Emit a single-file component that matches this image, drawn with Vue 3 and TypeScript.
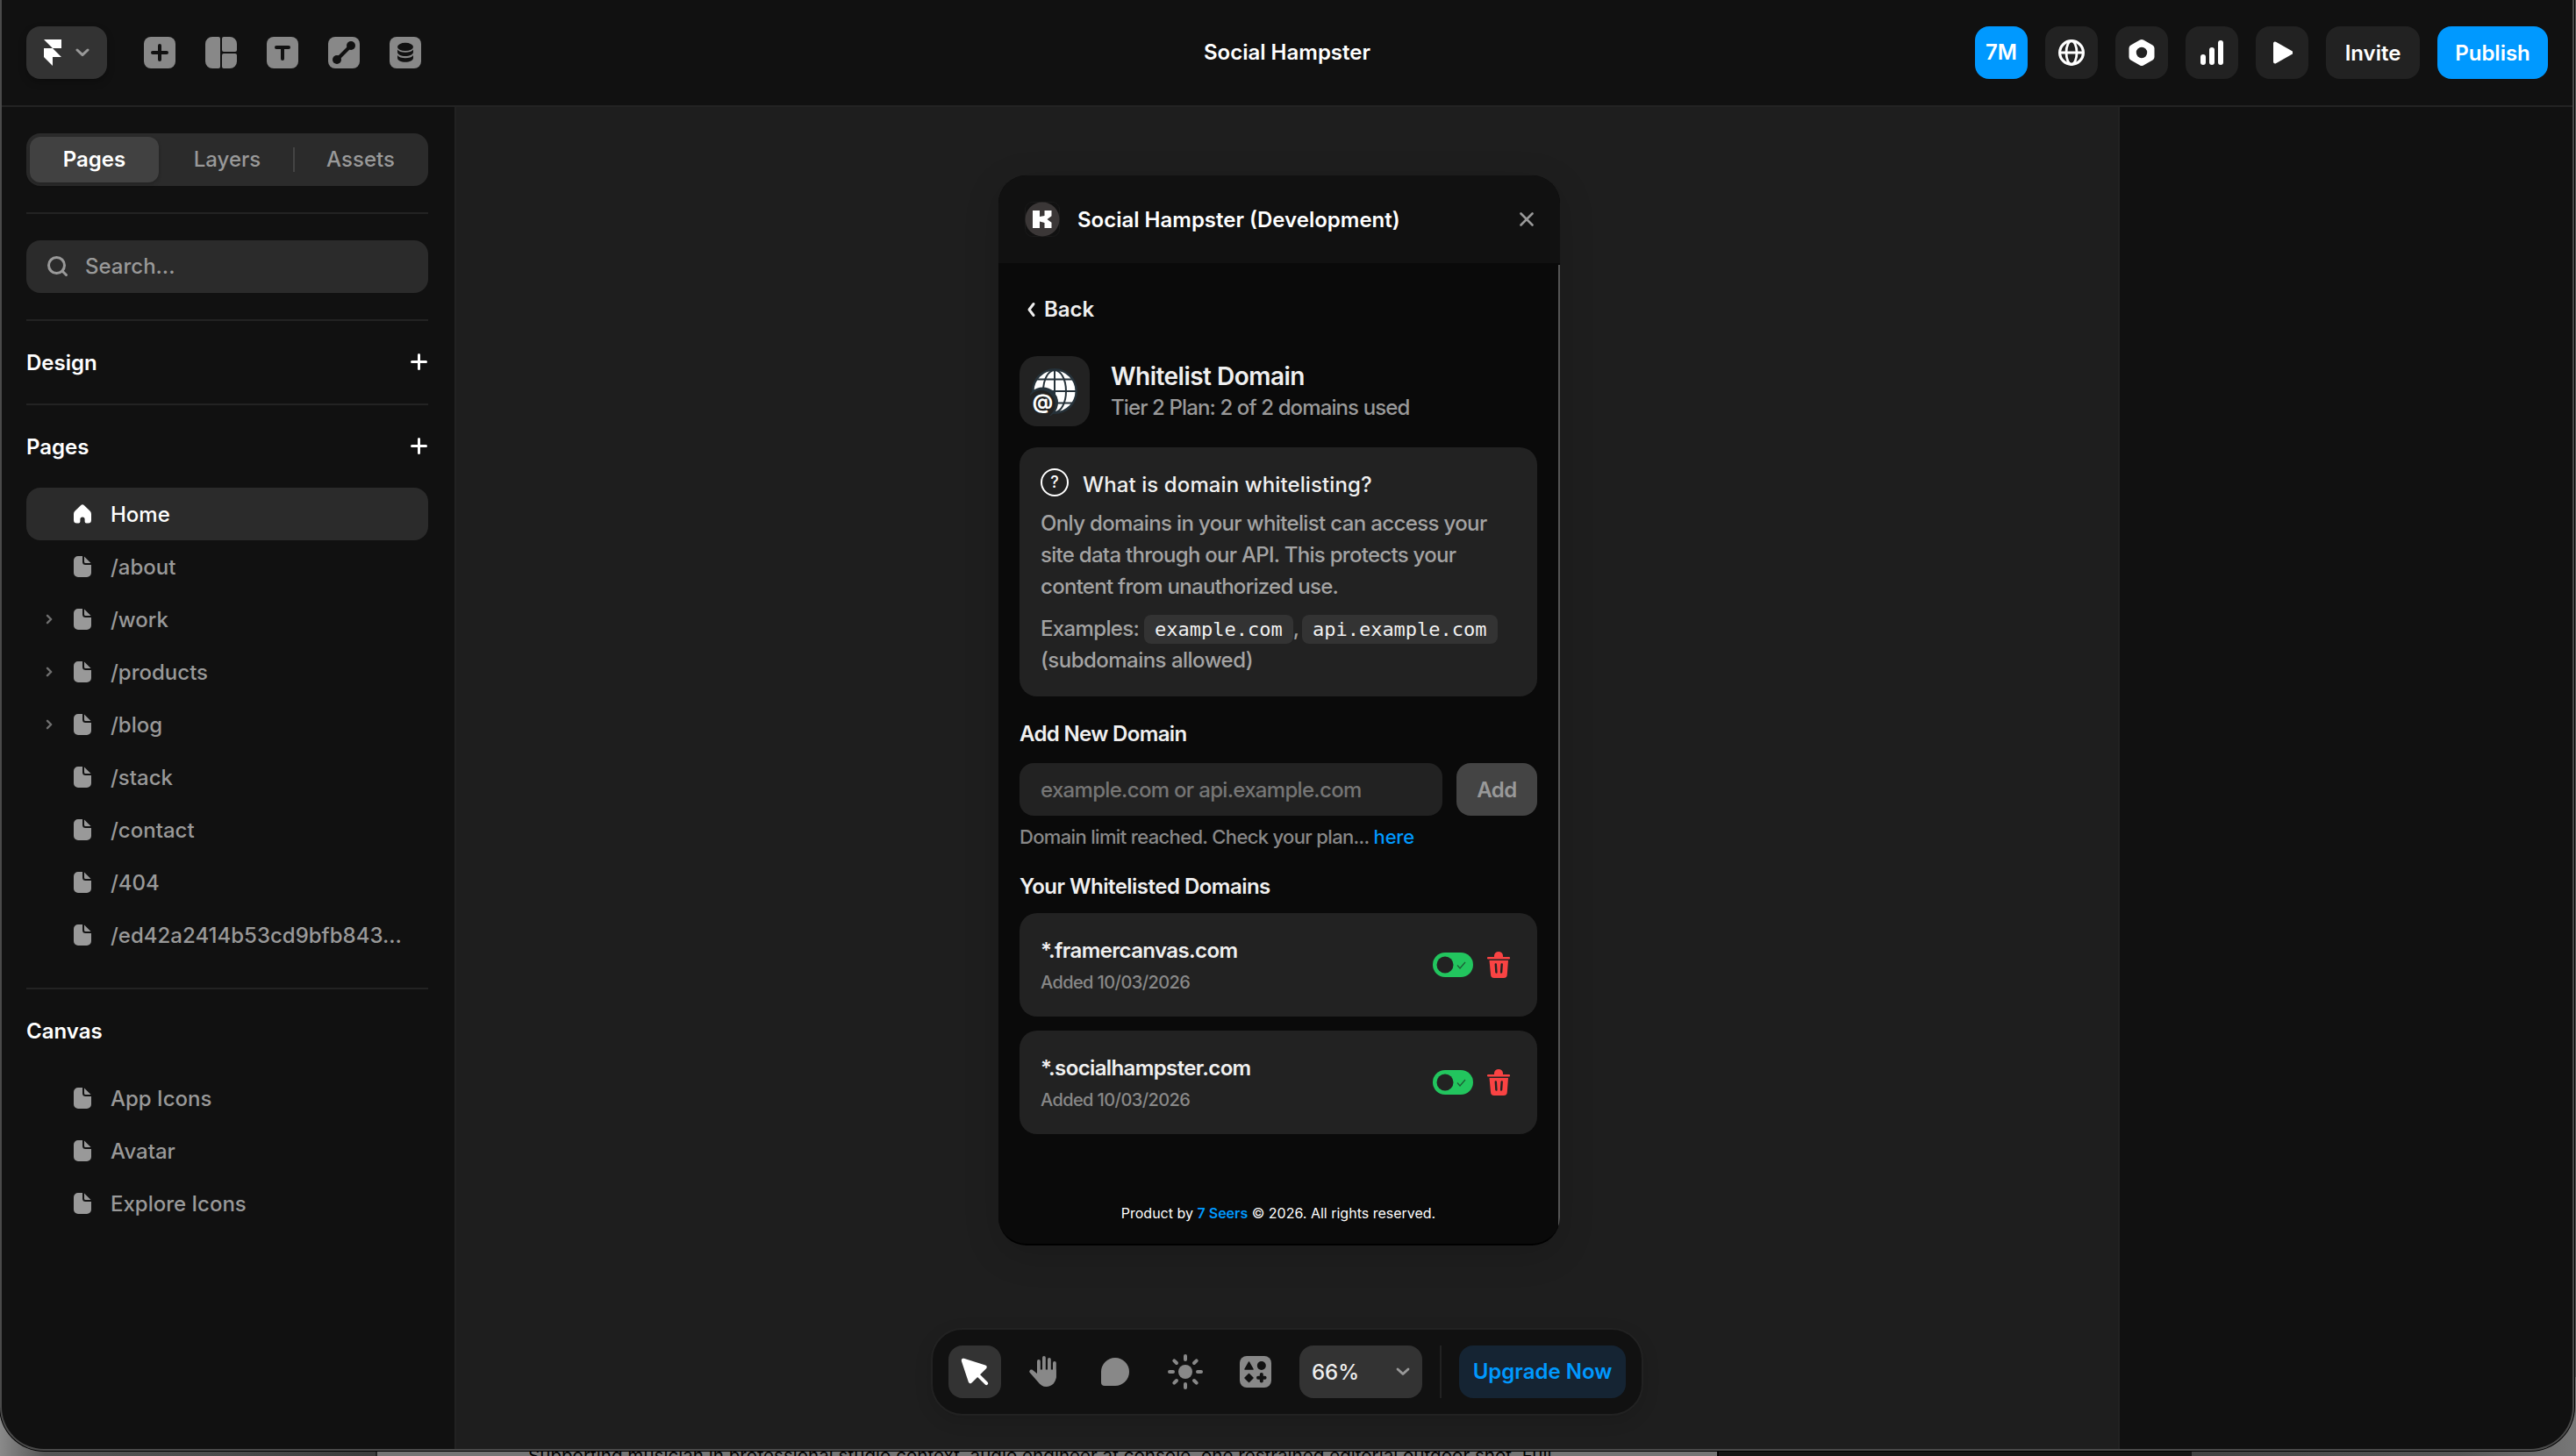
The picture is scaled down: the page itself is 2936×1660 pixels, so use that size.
<script setup lang="ts">
interface PageRow { label: string; home?: boolean; nested?: boolean }

const pages: PageRow[] = [
  { label: 'Home', home: true },
  { label: '/about' },
  { label: '/work', nested: true },
  { label: '/products', nested: true },
  { label: '/blog', nested: true },
  { label: '/stack' },
  { label: '/contact' },
  { label: '/404' },
  { label: '/ed42a2414b53cd9bfb843...' },
]
const canvasPages: string[] = ['App Icons', 'Avatar', 'Explore Icons']
const domains = [
  { name: '*.framercanvas.com', date: 'Added 10/03/2026' },
  { name: '*.socialhampster.com', date: 'Added 10/03/2026' },
]
</script>

<template>
  <div class="desktop">
    <div class="behind"><i class="b1" /><i class="b2" /><i class="b3" /><i class="b4" /></div>
    <div class="behind-text">Supporting musician in professional studio context, audio engineer at console, one restrained editorial outdoor shot. Full</div>
    <div class="window">
      <header class="topbar">
        <div class="tools">
          <button class="brand">
            <svg width="20" height="30" viewBox="0 0 20 30"><path d="M0 0h20v10H10zM0 10h10l10 10H0zM0 20h10v10z" fill="#fff" /></svg>
            <svg width="16" height="10" viewBox="0 0 16 10"><path d="M2 2l6 5.600L14 2" fill="none" stroke="#999" stroke-width="3" stroke-linecap="round" stroke-linejoin="round" /></svg>
          </button>
          <svg class="tool" viewBox="0 0 36 36"><rect width="36" height="36" rx="8" fill="#888" /><path d="M18 10v16M10 18h16" stroke="#111" stroke-width="4" stroke-linecap="round" /></svg>
          <svg class="tool" viewBox="0 0 36 36"><path d="M8 0h7a2 2 0 0 1 2 2v32a2 2 0 0 1-2 2H8a8 8 0 0 1-8-8V8a8 8 0 0 1 8-8zM21 0h7a8 8 0 0 1 8 8v7a2 2 0 0 1-2 2H21a2 2 0 0 1-2-2V2a2 2 0 0 1 2-2zM21 19h13a2 2 0 0 1 2 2v7a8 8 0 0 1-8 8h-7a2 2 0 0 1-2-2V21a2 2 0 0 1 2-2z" fill="#888" /></svg>
          <svg class="tool" viewBox="0 0 36 36"><rect width="36" height="36" rx="8" fill="#888" /><path d="M11 12h14M18 12v13" stroke="#111" stroke-width="4" stroke-linecap="round" /></svg>
          <svg class="tool" viewBox="0 0 36 36"><rect width="36" height="36" rx="8" fill="#888" /><path d="M10 26L26 10" stroke="#111" stroke-width="4" /><circle cx="10" cy="26" r="5" fill="#111" /><circle cx="26" cy="10" r="5" fill="#111" /></svg>
          <svg class="tool" viewBox="0 0 36 36"><rect width="36" height="36" rx="8" fill="#888" /><ellipse cx="18" cy="11.400" rx="9" ry="4.600" fill="#111" /><path d="M9 14.600c1.500 2.200 5 3.200 9 3.200s7.500-1 9-3.200v2.600c0 3-4 4.800-9 4.800s-9-1.800-9-4.800zM9 21c1.500 2.200 5 3.200 9 3.200s7.500-1 9-3.200v3c0 3-4 4.800-9 4.800s-9-1.800-9-4.800z" fill="#111" /></svg>
        </div>
        <div class="doc-title">Social Hampster</div>
        <div class="actions">
          <div class="btn sq blue seats">7M</div>
          <div class="btn sq"><svg width="30" height="30" viewBox="0 0 30 30" fill="none" stroke="#fff"><circle cx="15" cy="15" r="13.400" stroke-width="3.200" /><ellipse cx="15" cy="15" rx="6" ry="13.400" stroke-width="2.800" /><path d="M2 15h26" stroke-width="3" /></svg></div>
          <div class="btn sq"><svg width="30" height="32" viewBox="0 0 30 32"><path fill-rule="evenodd" d="M13 1.500a4 4 0 0 1 4 0l10.500 6a4 4 0 0 1 2 3.500v10a4 4 0 0 1-2 3.500l-10.500 6a4 4 0 0 1-4 0l-10.500-6a4 4 0 0 1-2-3.500V11a4 4 0 0 1 2-3.500zM15 9.800a6.200 6.200 0 1 0 0 12.400 6.200 6.200 0 0 0 0-12.400z" fill="#fff" /></svg></div>
          <div class="btn sq"><svg width="28" height="28" viewBox="0 0 28 28" fill="#fff"><rect x="1" y="16" width="6" height="12" rx="3" /><rect x="11" y="8" width="6" height="20" rx="3" /><rect x="21" y="0" width="6" height="28" rx="3" /></svg></div>
          <div class="btn sq"><svg width="24" height="28" viewBox="0 0 24 28"><path d="M4 3.500v21L22.500 14z" fill="#fff" stroke="#fff" stroke-width="4" stroke-linejoin="round" /></svg></div>
          <div class="btn invite">Invite</div>
          <div class="btn blue publish">Publish</div>
        </div>
      </header>

      <div class="work">
        <aside class="sidebar">
          <div class="tabs">
            <div class="tab on">Pages</div>
            <div class="tab layers">Layers</div>
            <i class="tab-sep" />
            <div class="tab assets">Assets</div>
          </div>
          <hr class="rule" />
          <div class="search">
            <svg width="24" height="24" viewBox="0 0 24 24" fill="none" stroke="#999" stroke-width="3" stroke-linecap="round"><circle cx="10.500" cy="10.500" r="9" /><path d="M17.500 17.500l4 4" /></svg>
            <span>Search...</span>
          </div>
          <hr class="rule after-search" />
          <div class="section"><span>Design</span><svg width="20" height="20" viewBox="0 0 20 20"><path d="M9.500 1.500v16M1.500 9.500h16" stroke="#fff" stroke-width="3" stroke-linecap="round" /></svg></div>
          <hr class="rule tight" />
          <div class="section"><span>Pages</span><svg width="20" height="20" viewBox="0 0 20 20"><path d="M9.500 1.500v16M1.500 9.500h16" stroke="#fff" stroke-width="3" stroke-linecap="round" /></svg></div>
          <div v-for="p in pages" :key="p.label" class="row" :class="{ on: p.home }">
            <span class="caret"><svg v-if="p.nested" width="8" height="12" viewBox="0 0 8 12"><path d="M2 1.800L6.200 6 2 10.200" fill="none" stroke="#6f6f6f" stroke-width="2.400" stroke-linecap="round" stroke-linejoin="round" /></svg></span>
            <svg v-if="p.home" width="20" height="22" viewBox="0 0 20 22"><path d="M8 1.200a3 3 0 0 1 4 0l6.500 6.300A5 5 0 0 1 20 11v7a3.500 3.500 0 0 1-3.500 3.500h-1.700A2 2 0 0 1 12.600 19.500V17a2.600 2.600 0 0 0-5.200 0v2.500a2 2 0 0 1-2.200 2H3.500A3.500 3.500 0 0 1 0 18v-7a5 5 0 0 1 1.500-3.500z" fill="#fff" /></svg>
            <svg v-else width="20" height="24" viewBox="0 0 20 24"><path d="M5 0h5v6.500A3.500 3.500 0 0 0 13.500 10H20v9a5 5 0 0 1-5 5H5a5 5 0 0 1-5-5V5a5 5 0 0 1 5-5zM12 .600L19.600 8h-6A1.600 1.600 0 0 1 12 6.400z" fill="#999" /></svg>
            <span class="row-label">{{ p.label }}</span>
          </div>
          <hr class="rule before-canvas" />
          <div class="section"><span>Canvas</span></div>
          <div v-for="c in canvasPages" :key="c" class="row">
            <span class="caret" />
            <svg width="20" height="24" viewBox="0 0 20 24"><path d="M5 0h5v6.500A3.500 3.500 0 0 0 13.500 10H20v9a5 5 0 0 1-5 5H5a5 5 0 0 1-5-5V5a5 5 0 0 1 5-5zM12 .600L19.600 8h-6A1.600 1.600 0 0 1 12 6.400z" fill="#999" /></svg>
            <span class="row-label">{{ c }}</span>
          </div>
        </aside>

        <main class="canvas">
          <section class="modal">
            <div class="modal-head">
              <svg width="40" height="40" viewBox="0 0 40 40"><rect x="0.500" y="0.500" width="39" height="39" rx="8" fill="none" stroke="#1a1a1a" /><circle cx="20" cy="20" r="19.500" fill="#3b3737" /><path d="M9 10h8v7l5.500-1V10h8v6.200L25.500 20l5 3.800V30h-8v-6L17 22.500V30H9z" fill="#fff" /></svg>
              <span class="modal-title">Social Hampster (Development)</span>
              <svg width="18" height="18" viewBox="0 0 18 18"><path d="M2.500 2.500l13 13M15.500 2.500l-13 13" stroke="#999" stroke-width="2.600" stroke-linecap="round" /></svg>
            </div>
            <div class="modal-body">
              <div class="back"><svg width="12" height="18" viewBox="0 0 12 18"><path d="M8 2.500L3 9l5 6.500" fill="none" stroke="#eee" stroke-width="3" stroke-linecap="round" stroke-linejoin="round" /></svg><span>Back</span></div>
              <div class="hero">
                <div class="tile">
                  <svg width="56" height="56" viewBox="0 0 56 56">
                    <circle cx="28" cy="28" r="26" fill="#26323a" />
                    <circle cx="28" cy="28" r="23.500" fill="#fff" />
                    <g fill="none" stroke="#26323a" stroke-width="2"><path d="M28 4v48M4 28h48M7 14.500h42M7 41.500h42" /><ellipse cx="28" cy="28" rx="13" ry="24" /></g>
                    <circle cx="14.500" cy="41" r="17.500" fill="#26323a" />
                    <circle cx="12.500" cy="43" r="16" fill="#222" />
                    <text x="14.500" y="47.800" text-anchor="middle" class="at">@</text>
                  </svg>
                </div>
                <div class="hero-text"><div class="h1">Whitelist Domain</div><div class="sub">Tier 2 Plan: 2 of 2 domains used</div></div>
              </div>
              <div class="info">
                <div class="info-head">
                  <span class="q">?</span>
                  <span class="info-title">What is domain whitelisting?</span>
                </div>
                <p class="para first">Only domains in your whitelist can access your<br><span class="snug">site data through our API. This protects your</span><br><span class="snug">content from unauthorized use.</span></p>
                <p class="para">Examples: <code>example.com</code><span class="comma">, </span><code>api.example.com</code><br><span class="aside">(subdomains allowed)</span></p>
              </div>
              <div class="h2 tighter">Add New Domain</div>
              <div class="add-row"><div class="field">example.com or api.example.com</div><div class="add">Add</div></div>
              <div class="note">Domain limit reached. Check your plan... <a>here</a></div>
              <div class="h2 second">Your Whitelisted Domains</div>
              <div v-for="d in domains" :key="d.name" class="domain">
                <div><div class="name">{{ d.name }}</div><div class="date">{{ d.date }}</div></div>
                <div class="ctl">
                  <svg width="46" height="28" viewBox="0 0 46 28"><rect width="46" height="28" rx="14" fill="#22c55e" /><circle cx="14" cy="14" r="9.500" fill="#222" /><path d="M28 14.500l3 3.500 6-7" fill="none" stroke="#1c5c35" stroke-width="1.200" /></svg>
                  <svg width="26" height="30" viewBox="0 0 26 30"><path d="M8 6V4.500a5 4.500 0 0 1 10 0V6h7a1 1 0 0 1 0 2.500H1A1 1 0 0 1 1 6zM2.500 10h21.500l-1.200 16a4 4 0 0 1-4 4H8a4 4 0 0 1-4-4z" fill="#f94343" /><path d="M9.800 14.500l.6 9M16.700 14.500l-.6 9" stroke="#222" stroke-width="2.400" stroke-linecap="round" /></svg>
                </div>
              </div>
              <div class="foot">Product by <b>7 Seers</b> © 2026. All rights reserved.</div>
            </div>
            <i class="scroll" />
          </section>

          <nav class="dock">
            <div class="dk on"><svg width="60" height="60" viewBox="0 0 60 60"><path d="M17 17l24.500 7.700L25 41z" fill="#fff" stroke="#fff" stroke-width="4.500" stroke-linejoin="round" /><path d="M34 34l9.200 9.200" stroke="#fff" stroke-width="4" stroke-linecap="round" /></svg></div>
            <div class="dk"><svg width="60" height="60" viewBox="0 0 60 60"><g fill="#888"><rect x="21" y="16" width="3.800" height="20" rx="1.900" /><rect x="27" y="12" width="3.800" height="20" rx="1.900" /><rect x="33" y="14" width="3.800" height="20" rx="1.900" /><rect x="39" y="18" width="3.800" height="20" rx="1.900" /><path d="M21 27.500h21.800V35c0 7-5 12-11.300 12-4 0-7-2-9.500-5.500l-9.200-10.500c-1.500-2 .7-4.500 2.900-3.300L21 32z" /></g></svg></div>
            <div class="dk"><svg width="60" height="60" viewBox="0 0 60 60"><path d="M30 14a16 16 0 0 1 0 32H18a4 4 0 0 1-4-4V30a16 16 0 0 1 16-16z" fill="#888" /></svg></div>
            <div class="dk"><svg width="60" height="60" viewBox="0 0 60 60"><circle cx="30" cy="30" r="8" fill="#888" /><path d="M30 12v4M30 44v4M12 30h4M44 30h4M17.300 17.300l2.700 2.700M40 40l2.700 2.700M17.300 42.700L20 40M40 20l2.700-2.700" stroke="#888" stroke-width="4" stroke-linecap="round" /></svg></div>
            <div class="dk"><svg width="60" height="60" viewBox="0 0 60 60"><rect x="12" y="12" width="36" height="36" rx="8" fill="#888" /><g fill="#111"><path d="M22.500 19l4.500 8h-9z" stroke="#111" stroke-width="1.500" stroke-linejoin="round" /><circle cx="36.800" cy="23" r="5" /><path d="M22.500 32.500l4.500 4.500-4.500 4.500L18 37z" stroke="#111" stroke-width="1.500" stroke-linejoin="round" /></g><path d="M36.800 33v7.600M33 36.800h7.600" stroke="#111" stroke-width="4" stroke-linecap="round" /></svg></div>
            <div class="zoom"><span>66%</span><svg width="16" height="10" viewBox="0 0 16 10"><path d="M2 2l6 5.600L14 2" fill="none" stroke="#999" stroke-width="2.800" stroke-linecap="round" stroke-linejoin="round" /></svg></div>
            <i class="dk-sep" />
            <div class="upgrade">Upgrade Now</div>
          </nav>
        </main>

        <aside class="inspector" />
      </div>
    </div>
  </div>
</template>

<style>
body { margin: 0; background: #111; }
</style>

<style scoped>
* { box-sizing: border-box; }
.desktop { position: relative; width: 2936px; height: 1660px; overflow: hidden; background: #5a5a5a; font-family: Inter, "Liberation Sans", sans-serif; font-size: 24px; font-weight: 500; color: #fff; }
svg { display: block; flex: none; }
i { display: block; }
.behind { position: absolute; left: 0; right: 0; bottom: 0; height: 90px; display: flex; }
.b1 { width: 428px; background: linear-gradient(90deg, #8a8a8a, #555 12%, #4c4c4c 60%, #3c3c3c); }
.b2 { width: 1529px; background: #757575; border-left: 2px solid #222; }
.b3 { width: 541px; background: #151515; border-left: 2px solid #000; }
.b4 { flex: 1; background: linear-gradient(90deg, #424242, #565656 70%, #777); }
.behind-text { position: absolute; left: 602px; top: 1645px; line-height: 30px; font-size: 20.6px; color: #000; font-weight: 400; white-space: nowrap; }
.window { position: relative; width: 2934px; height: 1654px; border: 2px solid #4a4a4a; border-top: 0; border-radius: 0 0 50px 50px; overflow: hidden; box-shadow: 0 0 0 1px #000; background: #111; display: flex; flex-direction: column; }
.topbar { height: 122px; flex: none; border-bottom: 2px solid #232323; padding: 0 28px; display: grid; grid-template-columns: 1fr auto 1fr; align-items: center; }
.tools { display: flex; align-items: center; }
.brand { width: 92px; height: 60px; border: 0; border-radius: 16px; background: #333; padding: 0 20px; display: flex; align-items: center; justify-content: space-between; box-shadow: 0 4px 8px rgba(0, 0, 0, .25); margin-right: 8px; }
.tool { width: 36px; height: 36px; margin-left: 34px; }
.doc-title { font-weight: 600; padding-bottom: 2px; }
.actions { display: flex; gap: 20px; justify-content: flex-end; }
.btn { height: 60px; border-radius: 16px; background: #222; display: flex; align-items: center; justify-content: center; font-weight: 600; }
.sq { width: 60px; }
.seats { padding-bottom: 2px; }
.blue { background: #09f; }
.invite { width: 107px; }
.publish { width: 126px; }
.work { flex: 1; display: flex; min-height: 0; }
.sidebar { width: 518px; flex: none; border-right: 2px solid #222; padding: 30px 30px 0 28px; }
.tabs { height: 60px; border-radius: 16px; background: #2b2b2b; padding: 4px; display: flex; align-items: center; color: #999; }
.tab { text-align: center; height: 52px; line-height: 52px; }
.tab.on { width: 147px; background: #414141; border-radius: 12px; color: #fff; font-weight: 600; box-shadow: 0 2px 4px rgba(0, 0, 0, .2); }
.layers { width: 153px; padding-left: 3px; }
.assets { flex: 1; padding-left: 2px; }
.tab-sep { width: 2px; height: 28px; background: #444; }
.rule { border: 0; height: 2px; background: #232323; margin: 30px 0; }
.rule.after-search { margin-bottom: 0; }
.rule.tight { margin: 0; }
.rule.before-canvas { margin-bottom: 0; }
.search { height: 60px; border-radius: 16px; background: #2b2b2b; display: flex; align-items: center; padding-left: 24px; gap: 19px; color: #999; }
.search span { padding-bottom: 2px; }
.section { height: 94px; display: flex; align-items: center; justify-content: space-between; font-weight: 600; }
.row { height: 60px; border-radius: 16px; display: flex; align-items: center; color: #999; }
.row.on { background: #2b2b2b; color: #fff; }
.caret { width: 54px; padding-left: 22px; }
.row-label { margin-left: 22px; }
.canvas { width: 1896px; flex: none; background: #1e1e1e; border-right: 2px solid #222; display: flex; flex-direction: column; align-items: center; position: relative; }
.modal { position: relative; margin-top: 78px; width: 640px; margin-left: -18px; height: 1220px; border-radius: 32px; overflow: hidden; background: #0a0a0a; border-bottom: 2px solid #000; display: flex; flex-direction: column; box-shadow: 0 10px 40px rgba(0, 0, 0, .15); }
.modal-head { height: 100px; flex: none; background: #111; padding: 0 29px 0 30px; display: flex; align-items: center; }
.modal-title { font-weight: 600; margin-left: 20px; flex: 1; }
.modal-body { flex: 1; padding: 0 26px 23px 24px; display: flex; flex-direction: column; letter-spacing: -.02em; }
.back { height: 106px; display: flex; align-items: center; padding-left: 8px; gap: 8px; font-weight: 600; color: #f0f0f0; letter-spacing: 0; }
.back span { padding-bottom: 2px; }
.hero { display: flex; gap: 24px; align-items: center; height: 80px; }
.tile { width: 80px; height: 80px; border-radius: 20px; background: #222; display: flex; align-items: center; justify-content: center; }
.at { font: 700 23px Inter, sans-serif; fill: #fff; letter-spacing: 0; }
.hero-text { padding-top: 2px; line-height: 36px; }
.h1 { font-size: 28px; font-weight: 600; color: #f0f0f0; letter-spacing: -.52px; }
.sub { color: #999; letter-spacing: -.88px; }
.info { margin-top: 24px; height: 284px; border-radius: 20px; background: #222; padding: 24px; color: #a3a3a3; }
.info-head { display: flex; height: 32px; gap: 16px; }
.q { width: 32px; height: 32px; border: 2px solid #fff; border-radius: 50%; font-size: 18px; line-height: 28px; text-align: center; color: #fff; letter-spacing: 0; }
.info-title { line-height: 38px; color: #f0f0f0; letter-spacing: .1px; }
.para { margin: 12px 0 0; line-height: 36px; letter-spacing: -.64px; white-space: nowrap; }
.para.first { margin-top: 13px; }
.snug { letter-spacing: -.72px; }
.comma { letter-spacing: -1.600px; }
.aside { letter-spacing: -.52px; }
code { font: 22px "DejaVu Sans Mono", monospace; letter-spacing: 0; color: #f0f0f0; background: #333; border-radius: 8px; padding: 4px 12px; }
.h2 { margin: 25px 0 15px; line-height: 36px; font-weight: 600; color: #f0f0f0; letter-spacing: -.52px; }
.h2.tighter { letter-spacing: -.66px; }
.h2.second { margin: 25px 0 12px; }
.add-row { display: flex; gap: 16px; }
.field { width: 482px; height: 60px; border-radius: 16px; background: #222; padding-left: 24px; line-height: 62px; color: #757575; letter-spacing: -.68px; }
.add { width: 92px; height: 60px; border-radius: 16px; background: #444; color: #999; line-height: 62px; text-align: center; font-weight: 600; }
.note { margin-top: 10px; line-height: 28px; font-size: 22px; color: #888; letter-spacing: -.66px; }
.note a { color: #09f; letter-spacing: -.2px; }
.domain { height: 118px; border-radius: 20px; background: #222; padding: 24px 31px 24px 24px; margin-bottom: 16px; display: flex; justify-content: space-between; align-items: center; }
.name { padding-top: 1px; line-height: 36px; font-weight: 600; color: #f0f0f0; letter-spacing: -.62px; }
.date { margin-top: 3px; line-height: 30px; font-size: 20px; color: #888; letter-spacing: -.6px; }
.ctl { display: flex; gap: 16px; align-items: center; }
.foot { margin-top: auto; text-align: center; font-size: 16px; line-height: 24px; font-weight: 400; letter-spacing: 0; }
.foot b { font-weight: 600; color: #09f; }
.scroll { position: absolute; right: 0; top: 102px; bottom: 20px; width: 2px; background: #555; }
.dock { position: absolute; left: 541px; top: 1392px; width: 812px; height: 100px; border: 2px solid #222; border-radius: 36px; background: #111; padding: 0 17px 0 18px; display: flex; align-items: center; gap: 20px; box-shadow: 0 6px 20px rgba(0, 0, 0, .12); }
.dk { width: 60px; height: 60px; border-radius: 16px; }
.dk.on { background: #333; }
.zoom { width: 140px; height: 60px; border-radius: 16px; background: #333; display: flex; align-items: center; justify-content: space-between; padding: 0 14px; color: #eee; }
.dk-sep { width: 2px; height: 60px; background: #222; }
.upgrade { width: 190px; height: 60px; border-radius: 16px; background: #152433; color: #09f; line-height: 60px; text-align: center; font-weight: 600; white-space: nowrap; }
.inspector { flex: 1; }
</style>
